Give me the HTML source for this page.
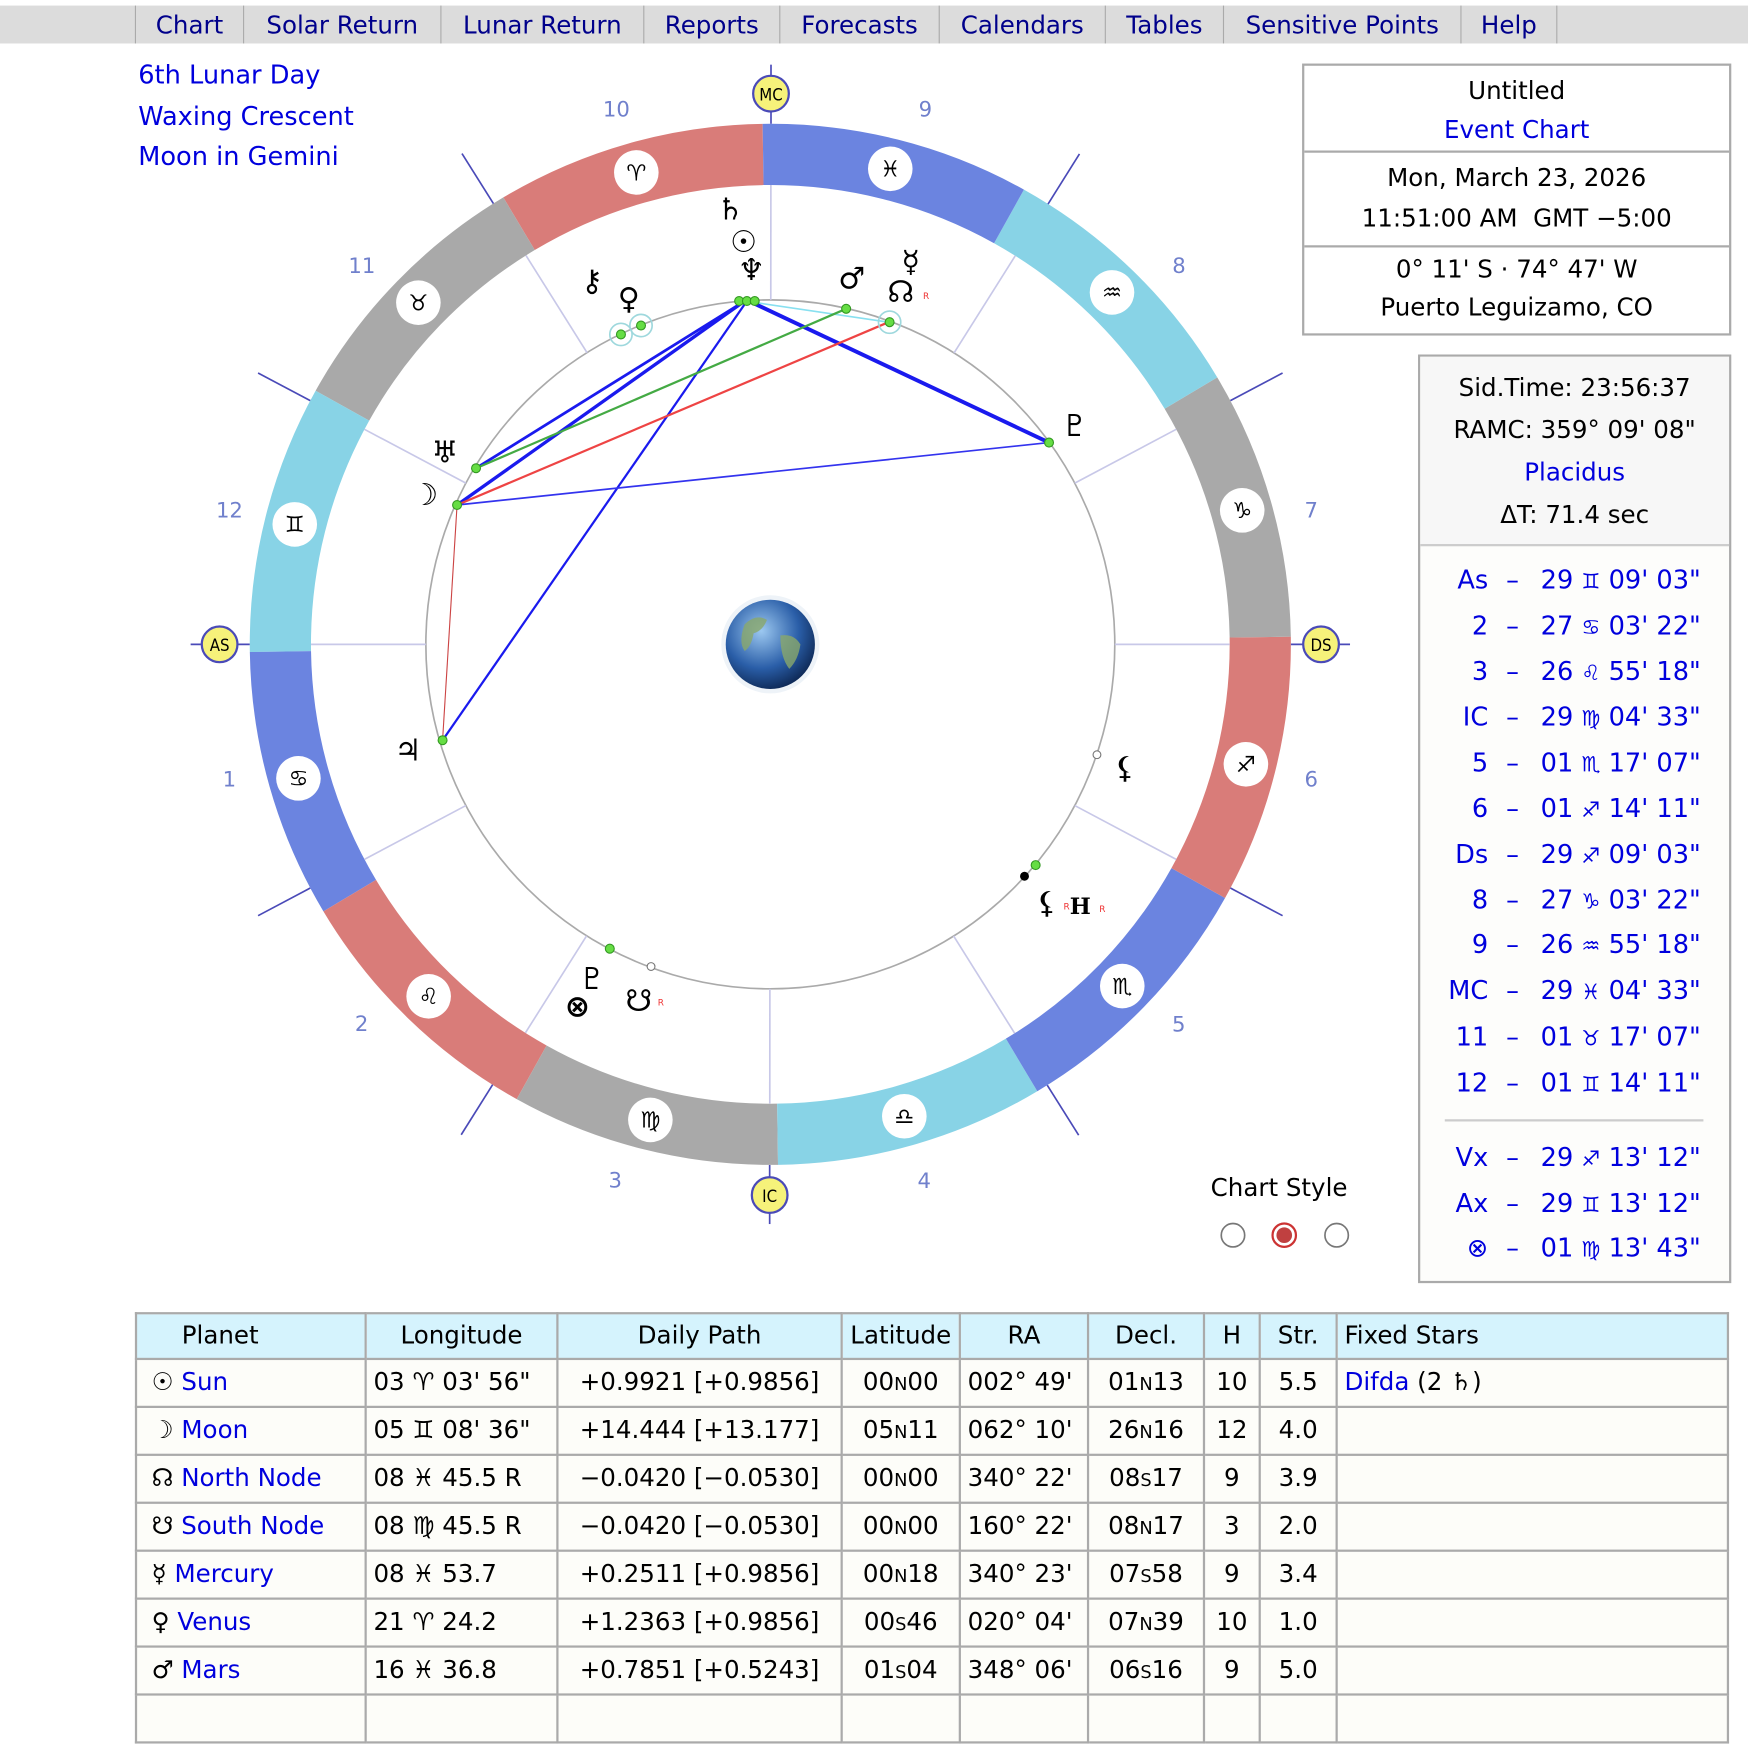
<!DOCTYPE html>
<html><head><meta charset="utf-8">
<style>
html,body{margin:0;padding:0;background:#fff;overflow:hidden}
body{width:1748px;height:1698px}
#w{position:absolute;left:0;top:0;width:1568px;height:1523px;transform:scale(1.11480);transform-origin:0 0;font-family:"DejaVu Sans","Liberation Sans",sans-serif;font-size:21px;color:#000}
.a{position:absolute;white-space:nowrap}
.bl{color:#0000dd}
#nav{position:absolute;left:0;top:5px;width:1568px;height:34px;background:#dcdcdc}
#nav span{position:absolute;top:0;height:34px;line-height:38px;color:#00008b;text-align:center;border-left:1px solid #aaa;font-size:22px}
.box{position:absolute;border:2px solid #aaa;background:#fff}
table{border-collapse:collapse;position:absolute;left:121px;top:1177px;width:1430px;table-layout:fixed}
td,th{border:2px solid #aaa;height:41px;padding:0 6px;font-weight:normal;white-space:nowrap;font-size:22px;overflow:hidden}
th{background:#d5f3fd;text-align:center;height:39px}
td{background:#fdfdf9}
td.c{text-align:center}
.sm{font-size:16px}
</style></head><body><div id="w">
<div id="nav">
<span style="left:121px;width:96px">Chart</span>
<span style="left:218px;width:176px">Solar Return</span>
<span style="left:395px;width:181px">Lunar Return</span>
<span style="left:577px;width:121px">Reports</span>
<span style="left:699px;width:142px">Forecasts</span>
<span style="left:842px;width:148px">Calendars</span>
<span style="left:991px;width:105px">Tables</span>
<span style="left:1097px;width:212px">Sensitive Points</span>
<span style="left:1310px;width:85px;border-right:1px solid #aaa">Help</span>
</div>
<div class="a bl" style="left:124px;top:50px;font-size:23px;line-height:36.5px">6th Lunar Day<br>Waxing Crescent<br>Moon in Gemini</div>

<svg id="ch" class="a" style="left:0;top:0" width="1230" height="1160" viewBox="0 0 1230 1160"></svg>

<div class="box" style="left:1168px;top:57px;width:381px;height:240px;text-align:center;font-size:22px">
<div style="height:78px;border-bottom:2px solid #aaa;line-height:35px;padding-top:6px;box-sizing:border-box">Untitled<br><span class="bl">Event Chart</span></div>
<div style="height:85px;border-bottom:2px solid #aaa;line-height:36px;padding-top:6px;box-sizing:border-box">Mon, March 23, 2026<br>11:51:00&nbsp;AM&nbsp; GMT&nbsp;−5:00</div>
<div style="line-height:34px;padding-top:4px">0° 11' S · 74° 47' W<br>Puerto Leguizamo, CO</div>
</div>

<div class="box" style="left:1272px;top:318px;width:277px;height:829px;background:#fdfdfb">
<div style="height:170px;background:#f7f7f7;border-bottom:2px solid #ccc;text-align:center;font-size:22px;line-height:38px;padding-top:10px;box-sizing:border-box">Sid.Time: 23:56:37<br>RAMC: 359° 09' 08"<br><span class="bl">Placidus</span><br>ΔT: 71.4 sec</div>
<div id="hl"></div>
<div style="position:absolute;left:22px;top:684px;width:232px;border-top:2px solid #ccc"></div>
</div>

<div class="a" style="left:1086px;top:1054px;font-size:22px">Chart Style</div>
<svg class="a" style="left:1090px;top:1092px" width="130" height="32">
<circle cx="16" cy="16" r="10.5" fill="#fff" stroke="#777" stroke-width="1.5"/>
<circle cx="62" cy="16" r="10.5" fill="#fff" stroke="#c33" stroke-width="2"/><circle cx="62" cy="16" r="7" fill="#c04040"/>
<circle cx="109" cy="16" r="10.5" fill="#fff" stroke="#777" stroke-width="1.5"/>
</svg>

<table>
<colgroup><col style="width:206px"><col style="width:172px"><col style="width:255px"><col style="width:106px"><col style="width:115px"><col style="width:104px"><col style="width:50px"><col style="width:69px"><col></colgroup>
<tr><th style="text-align:left;padding-left:40px">Planet</th><th>Longitude</th><th>Daily Path</th><th>Latitude</th><th>RA</th><th>Decl.</th><th>H</th><th>Str.</th><th style="text-align:left">Fixed Stars</th></tr>
<tr><td>&nbsp;☉ <span class="bl">Sun</span></td><td>03 ♈&#xFE0E; 03' 56"</td><td class="c">+0.9921 [+0.9856]</td><td class="c">00<span class="sm">N</span>00</td><td>002° 49'</td><td class="c">01<span class="sm">N</span>13</td><td class="c">10</td><td class="c">5.5</td><td><span class="bl">Difda</span> (2 ♄)</td></tr>
<tr><td>&nbsp;☽ <span class="bl">Moon</span></td><td>05 ♊&#xFE0E; 08' 36"</td><td class="c">+14.444 [+13.177]</td><td class="c">05<span class="sm">N</span>11</td><td>062° 10'</td><td class="c">26<span class="sm">N</span>16</td><td class="c">12</td><td class="c">4.0</td><td></td></tr>
<tr><td>&nbsp;☊ <span class="bl">North Node</span></td><td>08 ♓&#xFE0E; 45.5 R</td><td class="c">−0.0420 [−0.0530]</td><td class="c">00<span class="sm">N</span>00</td><td>340° 22'</td><td class="c">08<span class="sm">S</span>17</td><td class="c">9</td><td class="c">3.9</td><td></td></tr>
<tr><td>&nbsp;☋ <span class="bl">South Node</span></td><td>08 ♍&#xFE0E; 45.5 R</td><td class="c">−0.0420 [−0.0530]</td><td class="c">00<span class="sm">N</span>00</td><td>160° 22'</td><td class="c">08<span class="sm">N</span>17</td><td class="c">3</td><td class="c">2.0</td><td></td></tr>
<tr><td>&nbsp;☿ <span class="bl">Mercury</span></td><td>08 ♓&#xFE0E; 53.7</td><td class="c">+0.2511 [+0.9856]</td><td class="c">00<span class="sm">N</span>18</td><td>340° 23'</td><td class="c">07<span class="sm">S</span>58</td><td class="c">9</td><td class="c">3.4</td><td></td></tr>
<tr><td>&nbsp;♀ <span class="bl">Venus</span></td><td>21 ♈&#xFE0E; 24.2</td><td class="c">+1.2363 [+0.9856]</td><td class="c">00<span class="sm">S</span>46</td><td>020° 04'</td><td class="c">07<span class="sm">N</span>39</td><td class="c">10</td><td class="c">1.0</td><td></td></tr>
<tr><td>&nbsp;♂ <span class="bl">Mars</span></td><td>16 ♓&#xFE0E; 36.8</td><td class="c">+0.7851 [+0.5243]</td><td class="c">01<span class="sm">S</span>04</td><td>348° 06'</td><td class="c">06<span class="sm">S</span>16</td><td class="c">9</td><td class="c">5.0</td><td></td></tr>
<tr><td>&nbsp;</td><td></td><td></td><td></td><td></td><td></td><td></td><td></td><td></td></tr>
</table>
</div>
<script>
(function(){
var hl=document.getElementById('hl');
var rows=[["As","29","♊","09' 03\""],["2","27","♋","03' 22\""],["3","26","♌","55' 18\""],["IC","29","♍","04' 33\""],["5","01","♏","17' 07\""],["6","01","♐","14' 11\""],["Ds","29","♐","09' 03\""],["8","27","♑","03' 22\""],["9","26","♒","55' 18\""],["MC","29","♓","04' 33\""],["11","01","♉","17' 07\""],["12","01","♊","14' 11\""]];
var ys=[521,562,603,644,685,726,767,808,848,889,931,972];
var ex=[["Vx","29","♐","13' 12\"",1039],["Ax","29","♊","13' 12\"",1080],["⊗","01","♍","13' 43\"",1120]];
var h='';
function row(r,y){return '<div style="position:absolute;top:'+(y-318-14-2)+'px;left:0;width:277px;height:28px;line-height:28px;color:#0000dd;font-size:23px">'+
'<span style="position:absolute;right:216px">'+r[0]+'</span><span style="position:absolute;left:77px">–</span>'+
'<span style="position:absolute;left:108px">'+r[1]+' <span style="font-size:19px">'+r[2]+'&#xFE0E;</span> '+r[3]+'</span></div>';}
rows.forEach(function(r,i){h+=row(r,ys[i]);});
ex.forEach(function(r){h+=row(r,r[4]);});
hl.innerHTML=h;

var s=document.getElementById('ch'),cx=691,cy=578,o='';
function P(l,r){var t=(180+l-89.15)*Math.PI/180;return [cx+r*Math.cos(t),cy-r*Math.sin(t)];}
function f(n){return n.toFixed(1);}
var cols=['#d97c79','#a9a9a9','#88d3e6','#6b84e0'];
var gl=['♈','♉','♊','♋','♌','♍','♎','♏','♐','♑','♒','♓'];
for(var i=0;i<12;i++){
 var a=30*i,b=a+30,p1=P(a,467),p2=P(b,467),p3=P(b,412),p4=P(a,412);
 o+='<path d="M'+f(p1[0])+' '+f(p1[1])+' A467 467 0 0 0 '+f(p2[0])+' '+f(p2[1])+' L'+f(p3[0])+' '+f(p3[1])+' A412 412 0 0 1 '+f(p4[0])+' '+f(p4[1])+'Z" fill="'+cols[i%4]+'"/>';
}
for(var i=0;i<12;i++){var c=P(30*i+15,440);
 o+='<circle cx="'+f(c[0])+'" cy="'+f(c[1])+'" r="20" fill="#fff"/><text x="'+f(c[0])+'" y="'+f(c[1]+7)+'" text-anchor="middle" font-size="20" font-family="DejaVu Sans">'+gl[i]+'&#xFE0E;</text>';}
o+='<circle cx="691" cy="578" r="309" fill="none" stroke="#aaa" stroke-width="1.5"/>';
var cu=[89.15,117.06,146.92,179.08,211.29,241.24,269.15,297.06,326.92,359.08,31.29,61.24];
for(var i=0;i<12;i++){var l=cu[i];var a=P(l,309),b=P(l,412),c=P(l,467),d=P(l,520);
 o+='<line x1="'+f(a[0])+'" y1="'+f(a[1])+'" x2="'+f(b[0])+'" y2="'+f(b[1])+'" stroke="#c8c8e8" stroke-width="1.5"/>';
 o+='<line x1="'+f(c[0])+'" y1="'+f(c[1])+'" x2="'+f(d[0])+'" y2="'+f(d[1])+'" stroke="#4a4ab8" stroke-width="1.5"/>';
 var n=cu[(i+1)%12];if(n<l)n+=360;var m=P((l+n)/2,500);
 o+='<text x="'+f(m[0])+'" y="'+f(m[1]+7)+'" text-anchor="middle" font-size="19" fill="#7080cc" font-family="DejaVu Sans">'+(i+1)+'</text>';}
[[0,'AS'],[3,'IC'],[6,'DS'],[9,'MC']].forEach(function(q){var c=P(cu[q[0]],494);
 o+='<circle cx="'+f(c[0])+'" cy="'+f(c[1])+'" r="16" fill="#f6f27a" stroke="#4a4ab8" stroke-width="2"/><text x="'+f(c[0])+'" y="'+f(c[1]+6)+'" text-anchor="middle" font-size="15" font-family="DejaVu Sans Condensed,DejaVu Sans">'+q[1]+'</text>';});
function L(x1,y1,x2,y2,c,w){o+='<line x1="'+x1+'" y1="'+y1+'" x2="'+x2+'" y2="'+y2+'" stroke="'+c+'" stroke-width="'+w+'"/>';}
L(668,270,797,289,'#88e0f0',1.5);
L(410,453,668,270,'#1a1aee',3);L(427,420,665,272,'#1a1aee',2.5);
L(676,272,941,397,'#1a1aee',3.5);L(397,664,670,270,'#1a1aee',2);
L(427,420,759,277,'#44aa44',2);L(410,453,797,289,'#ee4444',2);
L(410,453,397,664,'#cc4444',1);L(410,453,941,397,'#3333ee',1.5);
[[557,300],[575,292],[798,289]].forEach(function(p){o+='<circle cx="'+p[0]+'" cy="'+p[1]+'" r="10" fill="none" stroke="#9ed8dd" stroke-width="1.5"/>';});
[[663,270],[670,270],[677,270],[557,300],[575,292],[759,277],[798,289],[427,420],[410,453],[397,664],[941,397],[929,776],[547,851]].forEach(function(p){o+='<circle cx="'+p[0]+'" cy="'+p[1]+'" r="4" fill="#66dd44" stroke="#339922" stroke-width="1"/>';});
o+='<circle cx="984" cy="677" r="3.5" fill="#fff" stroke="#777"/><circle cx="584" cy="867" r="3.5" fill="#fff" stroke="#777"/><circle cx="919" cy="786" r="4" fill="#000"/>';
[['♄',655,197],['☉',667,226],['♆',674,251],['⚷',531,261],['♀',564,277],['♂',764,259],['☿',817,244],['☊',808,271],['♅',399,415],['☽',381,453],['♃',366,682],['♇',964,391],['⚸',1009,698],['⚸',939,819],['♇',531,887],['⊗',518,912],['☋',573,907]].forEach(function(g){
 o+='<text x="'+g[1]+'" y="'+g[2]+'" text-anchor="middle" font-size="27" font-weight="bold" font-family="DejaVu Sans">'+g[0]+'</text>';});
o+='<text x="969" y="820" text-anchor="middle" font-size="20" font-weight="bold" font-family="DejaVu Serif">H</text>';
[[828,268],[954,816],[986,818],[590,902]].forEach(function(p){o+='<text x="'+p[0]+'" y="'+p[1]+'" font-size="8" fill="#e33" font-family="DejaVu Sans">R</text>';});
o+='<defs><radialGradient id="g" cx="0.4" cy="0.35" r="0.7"><stop offset="0" stop-color="#9cc8f0"/><stop offset="0.6" stop-color="#2a5ea8"/><stop offset="1" stop-color="#0c2550"/></radialGradient></defs>';
o+='<circle cx="691" cy="578" r="44" fill="#eef3f8"/><circle cx="691" cy="578" r="40" fill="url(#g)"/>';
o+='<path d="M668 560 q10 -10 20 -4 q-4 10 -12 12 q-2 12 -8 16 q-6 -8 0 -24z M700 570 q12 -2 18 8 q-2 14 -10 22 q-8 -10 -8 -30z" fill="#8aa86a" opacity="0.8"/>';
s.innerHTML=o;
})();
</script>
</body></html>
